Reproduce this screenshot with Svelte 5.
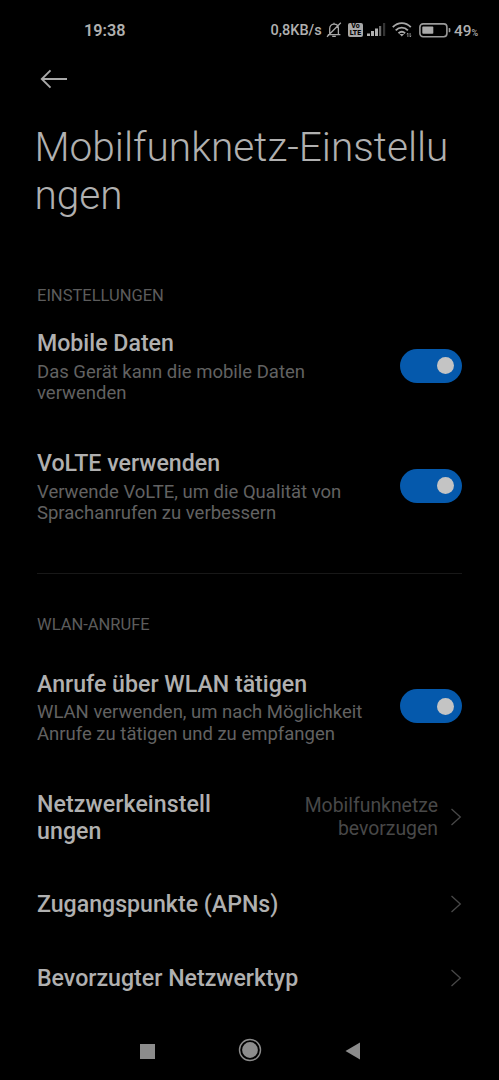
<script>
  let switches = $state([
    { title: 'Mobile Daten', lines: ['Das Gerät kann die mobile Daten', 'verwenden'], on: true },
    { title: 'VoLTE verwenden', lines: ['Verwende VoLTE, um die Qualität von', 'Sprachanrufen zu verbessern'], on: true }
  ]);
  let wlan = $state([
    { title: 'Anrufe über WLAN tätigen', lines: ['WLAN verwenden, um nach Möglichkeit', 'Anrufe zu tätigen und zu empfangen'], on: true }
  ]);
  const links = [
    { lines: ['Netzwerkeinstell', 'ungen'], value: ['Mobilfunknetze', 'bevorzugen'] },
    { lines: ['Zugangspunkte (APNs)'], value: [] },
    { lines: ['Bevorzugter Netzwerktyp'], value: [] }
  ];
</script>

{#snippet switchRow(item)}
  <div class="row tall">
    <div class="text">
      <div class="title">{item.title}</div>
      <div class="desc">{#each item.lines as line}<div>{line}</div>{/each}</div>
    </div>
    <button class="switch" class:on={item.on} role="switch" aria-checked={item.on} aria-label={item.title} onclick={() => (item.on = !item.on)}>
      <span class="knob"></span>
    </button>
  </div>
{/snippet}

<div class="screen">
  <header class="status">
    <span class="time">19:38</span>
    <div class="indicators">
      <span class="speed">0,8KB/s</span>
      <svg class="bell" width="16" height="16" viewBox="0 0 16 16" fill="none" stroke="#a8a8a8" stroke-width="1.3">
        <path d="M1.8 12.6h12.6M3.7 12.2V6.6C3.7 3.8 5.5 2.200 8 2.200s4.400 1.600 4.400 4.400v5.600M8 2.200V.8M6.200 14.400h3.600M14.800 .8L1 14.800" />
      </svg>
      <span class="volte"><span>Vo</span><span>LTE</span></span>
      <svg class="signal" width="19" height="14" viewBox="0 0 19 14">
        <g fill="#b0b0b0">
          <rect x="0" y="10.500" width="3" height="2.500" />
          <rect x="4" y="8" width="3" height="5" />
          <rect x="8" y="5.500" width="3" height="7.500" />
        </g>
        <rect x="12" y="3" width="2.200" height="10" fill="#6a6a6a" />
        <rect x="16" y="0" width="2.200" height="13" fill="#333" />
      </svg>
      <svg class="wifi" width="20" height="16" viewBox="0 0 20 16" fill="none" stroke="#a8a8a8" stroke-width="1.9">
        <path d="M.8 5.2C6-.2 13.600-.2 18.800 5.200M3.700 8.300C7.300 4.700 12.300 4.700 15.900 8.300M6.500 11.200C8.600 9.200 11 9.200 13.100 11.200" />
        <path d="M7.500 12h4.600L9.800 14.500z" fill="#a8a8a8" stroke="none" />
        <path d="M15.900 15v-4l-1.100 1.200M18.100 11v4l1.100-1.200" stroke-width=".8" />
      </svg>
      <svg class="battery" width="32" height="15" viewBox="0 0 32 15">
        <rect x=".9" y=".9" width="27" height="12.800" rx="3.200" fill="none" stroke="#9a9a9a" stroke-width="1.600" />
        <rect x="3.300" y="3.600" width="11" height="7.200" rx=".8" fill="#aaa" />
        <path d="M29.700 5h.7q1 0 1 1v2.300q0 1-1 1h-.7z" fill="#9a9a9a" />
      </svg>
      <span class="percent">49<small>%</small></span>
    </div>
  </header>

  <nav class="back">
    <svg width="28" height="20" viewBox="0 0 28 20" fill="none" stroke="#a9a9a9" stroke-width="1.900">
      <path d="M27 10H2M10.500 1.400L1.800 10l8.700 8.600" />
    </svg>
  </nav>

  <h1><span>Mobilfunknetz-Einstellu</span><span>ngen</span></h1>

  <section class="general">
    <h2>EINSTELLUNGEN</h2>
    {#each switches as item}{@render switchRow(item)}{/each}
  </section>

  <section class="calls">
    <h2>WLAN-ANRUFE</h2>
    {#each wlan as item}{@render switchRow(item)}{/each}
    {#each links as link}
      <div class="row link" class:double={link.lines.length > 1}>
        <div class="title">{#each link.lines as line}<div>{line}</div>{/each}</div>
        <div class="value">{#each link.value as line}<div>{line}</div>{/each}</div>
        <svg class="chevron" width="12" height="18" viewBox="0 0 12 18" fill="none" stroke="#484848" stroke-width="1.300">
          <path d="M1.500 1l8.800 8-8.800 8" />
        </svg>
      </div>
    {/each}
  </section>

  <footer>
    <svg width="15" height="15" viewBox="0 0 15 15"><rect width="15" height="15" fill="#8c8c8c" /></svg>
    <svg class="home" width="24" height="24" viewBox="0 0 24 24">
      <circle cx="12" cy="12" r="10.500" fill="none" stroke="#8c8c8c" stroke-width="1.400" />
      <circle cx="12" cy="12" r="7.900" fill="#8c8c8c" />
    </svg>
    <svg width="15" height="18" viewBox="0 0 15 18"><path d="M15 .5v17L.5 9z" fill="#8c8c8c" /></svg>
  </footer>
</div>

<style>
  :global(body) { background: #000; }
  .screen {
    box-sizing: border-box;
    width: 499px;
    height: 1080px;
    overflow: hidden;
    display: flex;
    flex-direction: column;
    background: #000;
    color: #b0b0b0;
    font-family: Roboto, sans-serif;
    white-space: nowrap;
  }
  .status {
    height: 60px;
    display: flex;
    align-items: center;
    padding-left: 84px;
    font-weight: 500;
    color: #b0b0b0;
  }
  .time { width: 186.500px; font-size: 16.200px; font-weight: 600; line-height: 20px; padding-top: 1px; }
  .indicators { display: flex; align-items: center; height: 20px; }
  .speed { font-size: 14.500px; width: 51px; padding-top: 1px; }
  .bell { margin-left: 4.500px; }
  .volte {
    width: 15px;
    height: 13.500px;
    margin-left: 6px;
    border-radius: 2px;
    background: #a8a8a8;
    color: #000;
    display: flex;
    flex-direction: column;
    align-items: center;
    font-size: 7px;
    font-weight: 800;
    line-height: 6.500px;
  }
  .signal { margin-left: 3.500px; }
  .wifi { margin-left: 6.500px; }
  .battery { margin-left: 6.500px; }
  .percent { font-size: 15.400px; margin-left: 3.600px; padding-top: 1px; }
  .percent small { font-size: 9px; }
  .back { height: 38px; padding-left: 39.500px; display: flex; align-items: center; }
  h1 {
    margin: 26px 0 0 34.500px;
    font-size: 40.600px;
    font-weight: 300;
    line-height: 47.600px;
    display: flex;
    flex-direction: column;
  }
  section { margin: 0 37px; }
  h2 { margin: 0; font-size: 16.500px; font-weight: 400; line-height: 20px; color: #5c5c5c; }
  .general { margin-top: 66.800px; padding-bottom: 27px; border-bottom: 1px solid #181818; }
  .calls { padding-top: 41px; }
  .calls h2 { margin-bottom: 11.200px; }
  .row { display: flex; align-items: center; justify-content: space-between; }
  .tall { height: 120px; }
  .text { padding-top: 3.500px; }
  .calls .text { padding-top: 4.500px; }
  .title { font-size: 23.150px; font-weight: 500; line-height: 27px; }
  .desc { margin-top: 4.300px; font-size: 18.500px; line-height: 21.800px; color: #626262; }
  .calls .desc { margin-top: 4px; }
  .switch {
    width: 62px;
    height: 34px;
    padding: 0 8.500px;
    border: 0;
    border-radius: 17px;
    background: #333;
    display: flex;
    align-items: center;
  }
  .switch.on { background: #0559ac; justify-content: flex-end; }
  .knob { width: 17px; height: 17px; border-radius: 50%; background: #c4c4c4; }
  .link { height: 74px; }
  .double { height: 101px; }
  .double .title { padding-top: 2px; letter-spacing: .08px; }
  .value {
    margin-left: auto;
    padding-top: 2px;
    font-size: 19.400px;
    line-height: 22.500px;
    text-align: right;
    color: #484848;
  }
  .chevron { margin-left: 12px; }
  footer {
    margin-top: auto;
    height: 58px;
    display: flex;
    align-items: center;
    justify-content: space-between;
    padding: 0 139px 0 140px;
  }
  .home { margin: 0 1px 1.500px 0; }
</style>
